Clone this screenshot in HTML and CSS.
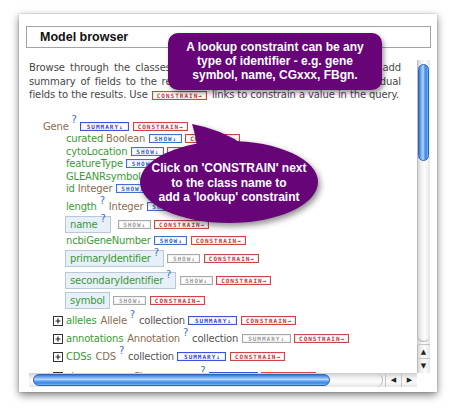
FILE: index.html
```html
<!DOCTYPE html>
<html>
<head>
<meta charset="utf-8">
<link rel="stylesheet" href="styles.css">
</head>
<body>
<div class="window">
  <div class="header">Model browser</div>
  <div class="scroller">
    <div class="content">
      <p class="intro">
        <span class="jl">Browse through the classes and their fields. Click the SUMMARY to add</span>
        <span class="jl">summary of fields to the results or click on the SHOW to add individual</span>
        <span class="ln">fields to the results. Use <span class="btn con">CONSTRAIN→</span> links to constrain a value in the query.</span>
      </p>
      <div class="tree">
        <div class="row cls"><span class="t">Gene</span><span class="q">?</span><span class="btn sum">SUMMARY↓</span><span class="btn con">CONSTRAIN→</span></div>
        <div class="row"><span class="lbl"><span class="n">curated</span> <span class="t">Boolean</span></span><span class="btn show">SHOW↓</span><span class="btn con">CONSTRAIN→</span></div>
        <div class="row"><span class="lbl"><span class="n">cytoLocation</span></span><span class="btn show">SHOW↓</span><span class="btn con">CONSTRAIN→</span></div>
        <div class="row"><span class="lbl"><span class="n">featureType</span></span><span class="btn show">SHOW↓</span><span class="btn con">CONSTRAIN→</span></div>
        <div class="row"><span class="lbl"><span class="n">GLEANRsymbol</span></span><span class="btn show">SHOW↓</span><span class="btn con">CONSTRAIN→</span></div>
        <div class="row"><span class="lbl"><span class="n">id</span> <span class="t">Integer</span></span><span class="btn show">SHOW↓</span><span class="btn con">CONSTRAIN→</span></div>
        <div class="row qrow"><span class="n">length</span><span class="q">?</span><span class="t after">Integer</span><span class="btn show">SHOW↓</span><span class="btn con">CONSTRAIN→</span></div>
        <div class="row boxed"><span class="fbox"><span class="n">name</span><span class="q">?</span></span><span class="btn show gray wide">SHOW↓</span><span class="btn con">CONSTRAIN→</span></div>
        <div class="row ncbi"><span class="lbl"><span class="n">ncbiGeneNumber</span></span><span class="btn show">SHOW↓</span><span class="btn con">CONSTRAIN→</span></div>
        <div class="row boxed"><span class="fbox"><span class="n">primaryIdentifier</span><span class="q">?</span></span><span class="btn show gray">SHOW↓</span><span class="btn con">CONSTRAIN→</span></div>
        <div class="row boxed sec"><span class="fbox"><span class="n">secondaryIdentifier</span><span class="q">?</span></span><span class="btn show gray">SHOW↓</span><span class="btn con">CONSTRAIN→</span></div>
        <div class="row boxed"><span class="fbox"><span class="n">symbol</span></span><span class="btn show gray">SHOW↓</span><span class="btn con">CONSTRAIN→</span></div>
        <div class="row coll"><svg class="plus" width="10" height="10" viewBox="0 0 10 10"><rect x="0.5" y="0.5" width="9" height="9" fill="#fff" stroke="#333"/><path d="M2.5 5h5M5 2.5v5" stroke="#222" stroke-width="1.2"/></svg><span class="n">alleles</span><span class="t sp">Allele</span><span class="q">?</span><span class="c">collection</span><span class="btn sum">SUMMARY↓</span><span class="btn con">CONSTRAIN→</span></div>
        <div class="row coll"><svg class="plus" width="10" height="10" viewBox="0 0 10 10"><rect x="0.5" y="0.5" width="9" height="9" fill="#fff" stroke="#333"/><path d="M2.5 5h5M5 2.5v5" stroke="#222" stroke-width="1.2"/></svg><span class="n">annotations</span><span class="t sp">Annotation</span><span class="q">?</span><span class="c">collection</span><span class="btn sum gray">SUMMARY↓</span><span class="btn con">CONSTRAIN→</span></div>
        <div class="row coll"><svg class="plus" width="10" height="10" viewBox="0 0 10 10"><rect x="0.5" y="0.5" width="9" height="9" fill="#fff" stroke="#333"/><path d="M2.5 5h5M5 2.5v5" stroke="#222" stroke-width="1.2"/></svg><span class="n">CDSs</span><span class="t sp">CDS</span><span class="q">?</span><span class="c">collection</span><span class="btn sum">SUMMARY↓</span><span class="btn con">CONSTRAIN→</span></div>
        <div class="row coll last"><svg class="plus" width="10" height="10" viewBox="0 0 10 10"><rect x="0.5" y="0.5" width="9" height="9" fill="#fff" stroke="#333"/><path d="M2.5 5h5M5 2.5v5" stroke="#222" stroke-width="1.2"/></svg><span class="n">chromosome</span><span class="t sp">Chromosome</span><span class="q">?</span><span class="btn sum">SUMMARY↓</span><span class="btn con">CONSTRAIN→</span></div>
      </div>
    </div>
    <div class="vscroll">
      <div class="vtrack"><div class="vthumb"></div></div>
      <div class="varrow up">▲</div>
      <div class="varrow down">▼</div>
    </div>
    <div class="hscroll">
      <div class="htrack"><div class="hthumb"></div></div>
      <div class="harrow left">◀</div>
      <div class="harrow right">▶</div>
    </div>
    <div class="corner"></div>
  </div>
</div>

<div class="bubble1">A lookup constraint can be any<br>type of identifier - e.g. gene<br>symbol, name, CGxxx, FBgn.</div>
<svg class="bubble2" width="200" height="120" viewBox="0 0 200 120">
  <path d="M62 9 Q 90 14 114 30 L 68 42 Q 67 24 62 9 Z" fill="#660478"/>
  <ellipse cx="99" cy="67" rx="89" ry="41" fill="#660478"/>
</svg>
<div class="bubble2-text">Click on 'CONSTRAIN' next<br>to the class name to<br>add a 'lookup' constraint</div>
</body>
</html>
```

FILE: styles.css
```css
html, body {
  margin: 0;
  background: #fff;
}
body {
  padding: 14px 0 0 19px;
  width: 456px;
  height: 416px;
  box-sizing: border-box;
  overflow: hidden;
  font-family: "DejaVu Sans", sans-serif;
}

.window {
  width: 418px;
  height: 378px;
  background: #fff;
  box-sizing: border-box;
  padding: 12px 6px 0 7px;
  box-shadow: 0 3px 8px rgba(0, 0, 0, 0.5), 0 0 1px rgba(0, 0, 0, 0.45);
}

.header {
  height: 22px;
  box-sizing: border-box;
  border: 1px solid #a3a3a3;
  font: bold 12.5px "Liberation Sans", Arial, sans-serif;
  color: #111;
  line-height: 20px;
  padding-left: 13px;
}

.scroller {
  margin: 12px 0 0 3px;
  width: 401px;
  height: 327px;
  display: grid;
  grid-template-columns: 388px 13px;
  grid-template-rows: 313px 14px;
}

.content {
  grid-column: 1;
  grid-row: 1;
  overflow: hidden;
  font-size: 10px;
  letter-spacing: -0.2px;
  color: #474747;
}

.intro {
  margin: 0;
  padding-top: 1px;
  line-height: 13.5px;
  width: 372px;
  letter-spacing: -0.1px;
}
.intro .jl {
  display: block;
  text-align: justify;
  text-align-last: justify;
}
.intro .ln {
  display: block;
}
.intro .btn {
  display: inline-flex;
  vertical-align: middle;
  margin: 0 2px 0 1px;
}

.tree {
  margin-top: 18px;
}

.row {
  display: flex;
  align-items: center;
  height: 12.5px;
  padding-left: 37px;
  white-space: nowrap;
}
.row.cls {
  height: 13px;
  padding-left: 14px;
}
.row.qrow {
  margin-top: 5.5px;
}
.row.boxed {
  height: 17px;
  margin-top: 3px;
  padding-left: 36px;
}
.row.sec {
  margin-top: 5px;
}
.row.ncbi {
  margin-top: 1.5px;
}
.row.coll {
  padding-left: 24px;
  margin-top: 5.5px;
}
.row.coll.last {
  margin-top: 7.5px;
}

.n { color: #3b9a36; }
.t { color: #8a6d51; }
.c { color: #555; margin-left: 4px; }
.after { margin-left: 4px; }
.sp { margin-left: 4px; }

.q {
  color: #3f6fc8;
  font-size: 10px;
  line-height: 10px;
  margin-left: 3px;
  align-self: flex-start;
  margin-top: -4.5px;
}

.fbox {
  display: flex;
  align-items: center;
  height: 17px;
  box-sizing: border-box;
  border: 1px solid #b9c7d8;
  background: #e7eff9;
  padding: 0 4px 0 4px;
}
.fbox .q {
  margin-top: -3px;
}

.plus {
  flex: none;
  margin-right: 3px;
}

.btn {
  display: flex;
  align-items: center;
  justify-content: center;
  flex: none;
  box-sizing: border-box;
  height: 9px;
  border: 1px solid;
  font: bold 6px "DejaVu Sans Mono", monospace;
  letter-spacing: 1px;
  line-height: 7px;
  padding-left: 1px;
  margin-left: 3.5px;
  background: #fff;
}
.sum {
  width: 49px;
  color: #2f45d8;
  border-color: #3c52e0;
  box-shadow: inset 0 0 0 1px #e6e9fc;
}
.con {
  width: 55px;
  color: #c63232;
  border-color: #cc4646;
  box-shadow: inset 0 0 0 1px #fbe6e6;
}
.show {
  width: 33px;
  color: #2f62c8;
  border-color: #3f70d0;
  box-shadow: inset 0 0 0 1px #e6eefb;
}
.gray {
  color: #9a9a9a;
  border-color: #a8a8a8;
  box-shadow: inset 0 0 0 1px #f1f1f1;
}
.wide {
  margin-left: 7px;
}

/* scrollbars */
.vscroll {
  grid-column: 2;
  grid-row: 1;
  display: flex;
  flex-direction: column;
  background: linear-gradient(to right, #cfcfcf, #f1f1f1 35%, #fcfcfc 60%, #e6e6e6);
}
.vtrack {
  flex: 1;
  padding-top: 4px;
  border-radius: 0 0 6px 6px;
  border-bottom: 1px solid #b8b8b8;
  box-shadow: inset 1px 0 0 #bdbdbd;
}
.vthumb {
  margin: 0 1px;
  height: 97px;
  border-radius: 6px;
  box-sizing: border-box;
  border: 1px solid #2f63b8;
  background: linear-gradient(to right, #3a78d8 0%, #86bbf6 30%, #b5d8fc 45%, #5e9ff0 62%, #3b86e8 80%, #7ab7f5 100%);
}
.varrow {
  display: flex;
  align-items: center;
  justify-content: center;
  font-size: 7px;
  color: #222;
  border-top: 1px solid #c4c4c4;
  box-shadow: inset 1px 0 0 #bdbdbd;
}
.varrow.up { height: 13px; margin-top: 2px; }
.varrow.down { height: 14px; }

.hscroll {
  grid-column: 1;
  grid-row: 2;
  display: flex;
  background: linear-gradient(to bottom, #cfcfcf, #f1f1f1 35%, #fcfcfc 60%, #e6e6e6);
}
.htrack {
  flex: 1;
  padding: 1px 0 0 4px;
  border-radius: 0 7px 7px 0;
  border-right: 1px solid #b8b8b8;
}
.hthumb {
  width: 297px;
  height: 12px;
  border-radius: 6px;
  box-sizing: border-box;
  border: 1px solid #2f63b8;
  background: linear-gradient(to bottom, #3a78d8 0%, #86bbf6 30%, #b5d8fc 45%, #5e9ff0 62%, #3b86e8 80%, #7ab7f5 100%);
}
.harrow {
  display: flex;
  align-items: center;
  justify-content: center;
  font-size: 7px;
  color: #222;
  border-left: 1px solid #c4c4c4;
}
.harrow.left { width: 15px; margin-left: 2px; }
.harrow.right { width: 15px; }

.corner {
  grid-column: 2;
  grid-row: 2;
  background: #fff;
}

/* callouts */
.bubble1 {
  position: absolute;
  left: 168px;
  top: 33px;
  width: 214px;
  height: 57px;
  box-sizing: border-box;
  padding-top: 7px;
  border-radius: 10px;
  background: #660478;
  color: #fff;
  font: bold 12px/14px "Liberation Sans", Arial, sans-serif;
  text-align: center;
  box-shadow: 2px 3px 5px rgba(0, 0, 0, 0.4);
}

.bubble2 {
  position: absolute;
  left: 130px;
  top: 115px;
  filter: drop-shadow(2px 3px 3px rgba(0, 0, 0, 0.45));
}

.bubble2-text {
  position: absolute;
  left: 139px;
  top: 161px;
  width: 180px;
  color: #fff;
  font: bold 12px/14.5px "Liberation Sans", Arial, sans-serif;
  text-align: center;
}
```
